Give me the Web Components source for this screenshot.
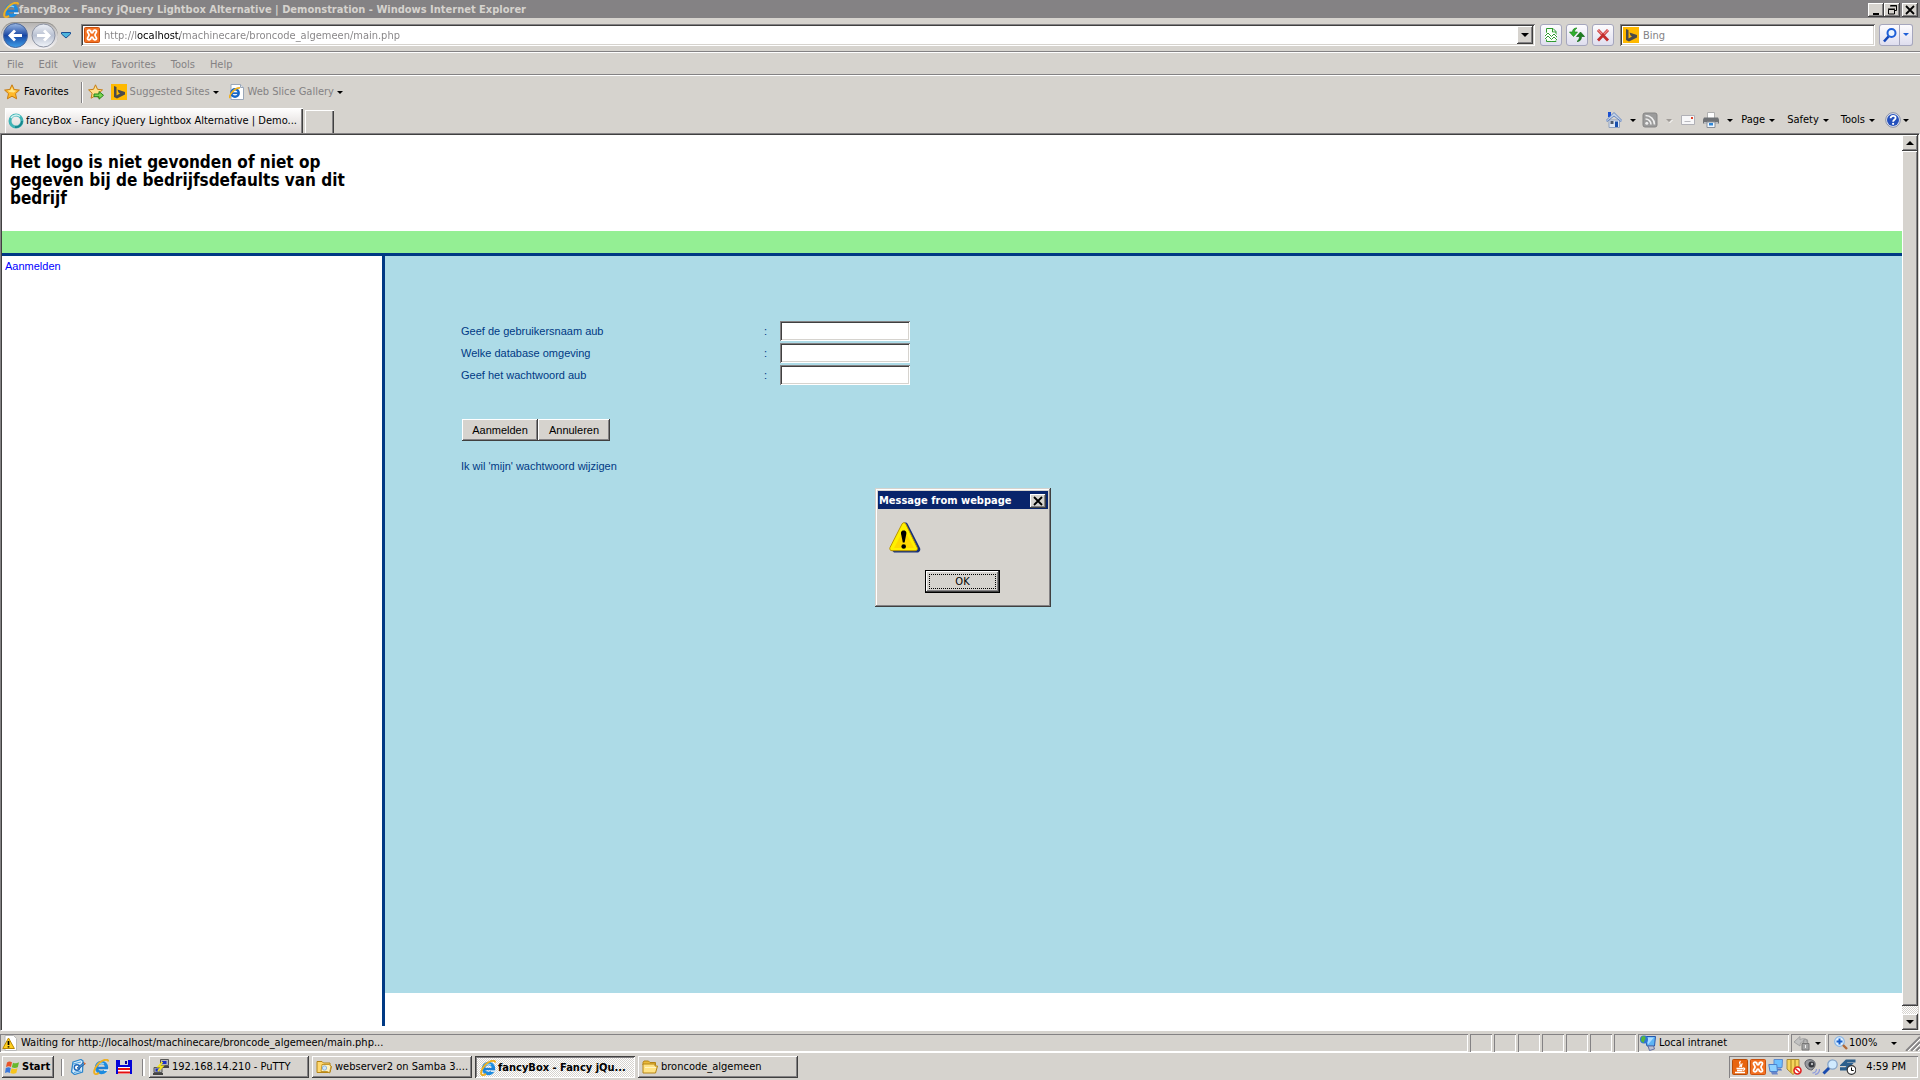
<!DOCTYPE html>
<html lang="en">
<head>
<meta charset="utf-8">
<title>fancyBox - Fancy jQuery Lightbox Alternative | Demonstration</title>
<style>
html, body { margin: 0; height: 100%; }
body { font: 11px/14px "DejaVu Sans Condensed", "DejaVu Sans", sans-serif; color: #000; background: #d6d3ce; overflow: hidden; }
</style>
</head>
<body>
<browser-desktop></browser-desktop>
<script>
const base = `
*, *::before, *::after { box-sizing: border-box; }
button, input { font: inherit; color: inherit; margin: 0; padding: 0; border: 0; background: none; border-radius: 0; outline: 0; }
button { display: flex; align-items: center; white-space: nowrap; }
.raised { background: #d6d3ce; box-shadow: inset -1px -1px #404040, inset 1px 1px #fff, inset -2px -2px #848284, inset 2px 2px #d6d3ce; }
.sunken { background: #fff; box-shadow: inset 1px 1px #848284, inset -1px -1px #fff, inset 2px 2px #404040, inset -2px -2px #d6d3ce; }
.grow { flex: 1; min-width: 0; }
`;
function define(name, css, html) {
  customElements.define(name, class extends HTMLElement {
    constructor() {
      super();
      this.attachShadow({ mode: 'open' }).innerHTML = `<style>${base}${css}</style>${html}`;
    }
  });
}

const icons = {
  ie: '<ellipse cx="8.500" cy="8.500" rx="5" ry="5" fill="none" stroke="#1b8be0" stroke-width="3.400"/><path d="M4 9h11" stroke="#1b7fd6" stroke-width="2.400"/><path d="M11 10.300h5v1.700h-5z" fill="#d6e8f5"/><path d="M5 5.500a5 5 0 0 1 6-.5" stroke="#8fd4fb" fill="none" stroke-width="1.400"/><path d="M2 15C-.5 13 3 5 9 2c3-1.600 6-2 6.500.500M2 15c1.500.5 3-.4 4-1.300" stroke="#eeb022" stroke-width="1.900" fill="none"/>',
  iepage: '<path d="M2 .5h9.500l3 3v12H2z" fill="#fff" stroke="#9aa7b8"/><path d="M11.500.5v3h3" fill="#dfe6ee" stroke="#9aa7b8"/><circle cx="6" cy="9" r="3.700" fill="none" stroke="#1466c8" stroke-width="2.400"/><path d="M3 9.200h7" stroke="#1466c8" stroke-width="1.800"/><path d="M1 14C-.5 11 6 3.500 11 4" stroke="#eeb022" stroke-width="1.700" fill="none"/>',
  xampp: '<rect x=".5" y=".5" width="15" height="15" rx="1" fill="#f37021" stroke="#c9500c"/><path d="M3.500 4.500c0-2 3.500-1.500 3.500.5 0 1 2 1 2 0 0-2 3.500-2.500 3.500-.5 0 1.500-1.500 2-1.500 3.500s1.500 2 1.500 3.500c0 2-3.500 1.500-3.500-.5 0-1-2-1-2 0 0 2-3.500 2.500-3.500.5C3.500 10 5 9.500 5 8S3.500 6 3.500 4.500z" fill="none" stroke="#fff" stroke-width="1.800"/>',
  bing: '<path d="M0 0h16v16H0z" fill="#ffb900"/><path d="M3 2l2.500 1v8.500l3.500-2-1.500-1L6.500 5.500 14 8v2.500L6 14.500 3 13z" fill="#4b4b4b"/>',
  star: '<path d="M8 .8l2.200 4.700 5.200.6-3.900 3.500 1.100 5.200L8 12.200l-4.600 2.600 1.100-5.200L.6 6.100l5.200-.6z" fill="#ffb92a" stroke="#c77c12"/><path d="M8 3l1.300 3.300 3 .5-2.500 1.700-4.300-.4-2-1.500 3-.4z" fill="#ffe68a"/>',
  addstar: '<path d="M7.500.8l2 4.500 5 .6-3.700 3.300 1 5-4.300-2.500-4.400 2.500 1-5L.6 5.900l4.900-.6z" fill="#ffe08a" stroke="#c77c12"/><path d="M6 10h5V7.500l4.500 3.800-4.500 3.900v-2.500H6z" fill="#7ad650" stroke="#24831a"/>',
  ring: '<circle cx="8" cy="8" r="6" fill="none" stroke="#3fb4b6" stroke-width="3"/><path d="M3 5a6 6 0 0 1 9-1.500" stroke="#d4f3f1" stroke-width="1.500" fill="none"/><path d="M14 8A6 6 0 0 1 7 14" stroke="#17848b" stroke-width="1.800" fill="none"/>',
  compat: '<path d="M3.500 1.500h6.500l3 3v10H3.500z" fill="#f4fff2" stroke="#2f9a2f"/><path d="M9.500 1.500v3.500h3.500" fill="none" stroke="#2f9a2f"/><path d="M2 9l3-3 3.500 3.500L11 7l3 3M2 12l3-3 3.500 3.500L11 10l3 3" fill="none" stroke="#fff" stroke-width="2.600"/><path d="M2 9l3-3 3.500 3.500L11 7l3 3M2 12l3-3 3.500 3.500L11 10l3 3" fill="none" stroke="#2f9a2f"/>',
  refresh: '<path d="M8 1C5 1 3.500 2.500 3.500 5H.5l4 4.500L8.500 5h-3C5.500 3.500 6 2.500 8 1z" fill="#31b02f" stroke="#1f8a20" stroke-width=".7"/><path d="M8 14.500c3 0 4.500-2 4.500-5h3L11.500 5 7.500 9.500h3c0 2-.5 3.500-2.500 5z" fill="#1f7d20" stroke="#0f6a14" stroke-width=".7"/>',
  stop: '<path d="M3 3l10 10.500M13 3L3 13.500" stroke="#c32d2d" stroke-width="2.800"/><path d="M3 3l4 4M13 3L9 7" stroke="#ee8585" stroke-width="1.400"/>',
  search: '<circle cx="9.500" cy="6" r="4" fill="#eaf4ff" stroke="#1d5fd8" stroke-width="2"/><path d="M6.500 9.500L2 14.500" stroke="#1547b8" stroke-width="2.600"/>',
  home: '<path d="M3 8h10.500v7.500H3z" fill="#dfe7f2" stroke="#8ea0bf"/><path d="M2 0h3v5H2z" fill="#1a4fd0"/><path d="M0 8.500L8 .5l8 8-1 1-7-5.500-7 5.500z" fill="#c6d4e6" stroke="#4c74bc" stroke-width=".8"/><path d="M4.500 9h3v3h-3z" fill="#4d5b70"/><path d="M9 9.500h3V15H9z" fill="#174fae"/>',
  rss: '<rect x="1" y="1" width="14" height="14" rx="2" fill="#9b9b9b" stroke="#858585"/><circle cx="4.800" cy="11.200" r="1.500" fill="#eee"/><path d="M3.500 7a5.500 5.500 0 0 1 5.500 5.500M3.500 3.500a9 9 0 0 1 9 9" fill="none" stroke="#eee" stroke-width="1.600"/>',
  mail: '<path d="M1.500 3.500h13v9h-13z" fill="#f7f7f9" stroke="#b0b0b6"/><path d="M4.500 9.500h6" stroke="#b9b9bf"/><path d="M11 5h2v2h-2z" fill="#e0432b"/>',
  print: '<path d="M4.500.5h7v6h-7z" fill="#fff" stroke="#b0b0b0"/><path d="M1 5.500h14l1 2v4H0v-4z" fill="#6f7276"/><path d="M1 10h14v2H1z" fill="#b9bcc0"/><path d="M4 10h8v5.500H4z" fill="#eef6ff" stroke="#8a8f97"/><path d="M6 11h4v2.500H6z" fill="#2f86d6"/>',
  help: '<circle cx="8" cy="8" r="7.300" fill="#e4e7f2" stroke="#8890a8"/><circle cx="8" cy="8" r="6" fill="#2450bc"/><path d="M5.600 6.300C5.600 3 10.600 3 10.600 6c0 1.700-2.500 1.900-2.500 3.700" fill="none" stroke="#fff" stroke-width="1.800"/><circle cx="8.100" cy="11.800" r="1.100" fill="#fff"/>',
  warnpage: '<path d="M3 .5h8.500l3 3v12H3z" fill="#fff" stroke="#b9b9b9"/><path d="M6.500 3L.8 13.500h11.600z" fill="#ffcf1f" stroke="#b88700"/><path d="M6.500 6v4M6.500 11.200v1.300" stroke="#000" stroke-width="1.700"/>',
  warn: '<path d="M15 1c1.500-1 3-.5 4 1.500L31 26c1 2-.5 4.500-2.500 4.500H5l-2-2z" fill="#16317d"/><path d="M13 2c1-1.800 2.800-1.800 3.800 0l11.400 23.500c.9 1.700-.2 3.200-2 3.200H3c-1.800 0-2.800-1.500-2-3.200z" fill="#fff000" stroke="#b89300"/><path d="M15 7L5 26h20z" fill="#ffcf00" opacity=".7"/><path d="M14.700 8.500c3 0 3 2.500 2.300 5l-1.400 7h-1.800l-1.400-7c-.7-2.500-.7-5 2.300-5z"/><circle cx="14.700" cy="24.500" r="2.300"/>',
  flag: '<path d="M2 3.500c2-1.500 3.600-1 5-.2L6 8C4.500 7 3 7 1 8z" fill="#e8542a"/><path d="M8 3.700c2 1 3.500.6 6-.5l-1.200 5c-2 1-4 1-6 0z" fill="#67b82c"/><path d="M.8 9c2-1 3.500-1 5 0l-1 5C3 13 2 13 0 14z" fill="#3a78dc"/><path d="M6.600 9.200c2 1 3.700 1 5.900 0L11.300 14c-2 1-4 1-6 0z" fill="#f7c41c"/>',
  desk: '<path d="M3 3l8-2.500 2 1.500-.5 11-8 2.500L1.500 13z" fill="#d8ecfc" stroke="#2d86cc" stroke-width="1.300"/><path d="M3 5l8-2M4 13.500l7-1.500" stroke="#4ea3e0"/><circle cx="7" cy="8.500" r="2.700" fill="#fff" stroke="#1c66b8" stroke-width="1.400"/><path d="M7 9l6.500-5.500L15 5 9 9.500z" fill="#3d92d8" stroke="#1c4f96" stroke-width=".8"/><path d="M13.500 3l2.500 1.500L14.500 6z" fill="#e06a2a"/>',
  floppy: '<path d="M0 1h16v14H0z" fill="#0404d8"/><path d="M4 1h8v5H4z" fill="#d9d9d9"/><path d="M9 2h2v3H9z" fill="#0404a0"/><path d="M2 8h12v7H2z" fill="#fff"/><path d="M2 9h12v2H2zM2 12.500h12v2H2z" fill="#e41010"/>',
  putty: '<path d="M7.500.5h8v6h-8z" fill="#b5b5b5" stroke="#555"/><path d="M9 2h4.500v3H9z" fill="#1b2fc4"/><path d="M1 8.500h8v5H1z" fill="#b5b5b5" stroke="#555"/><path d="M2.500 9.500h4.500v3H2.500z" fill="#1b2fc4"/><path d="M0 14h10v2H0zM7 7h9v2H7z" fill="#444"/><path d="M9.500 3L5.500 7.500h4L5 12" stroke="#f2e21c" stroke-width="1.800" fill="none"/>',
  folder: '<path d="M1 3.500l1-1.500h4.500l1.500 1.500h5.500V6H1z" fill="#e9b93a" stroke="#b58414"/><path d="M1 14V5h12v2h2.500L13.500 14z" fill="#ffe384" stroke="#b58414"/><path d="M3 8.500h11" stroke="#fff4c4"/>',
  netfolder: '<path d="M1 13.500V2.500h5l1.500 1.500H14v2l1.500 1.500-1.500 6z" fill="#ffd970" stroke="#b58414"/><path d="M6 5.500h7l2 1.500-1.500 7-2-1.500H5z" fill="#fff2c0" stroke="#b58414" stroke-width=".8"/><circle cx="8.500" cy="9" r="2.200" fill="#cfe6fb" stroke="#7aa7d4" stroke-width=".8"/>',
  intranet: '<path d="M4.500 1.500h11l-1 9.500H7z" fill="#5cb3f4" stroke="#2457ae"/><path d="M6.500 2.500H14l-6 7z" fill="#a9dcff"/><circle cx="4" cy="4.500" r="4" fill="#2f74d6"/><path d="M1.500 2c2-2 4.500-.5 4 1.500L3.500 8 1 6z" fill="#54b53b"/><path d="M8 11h5.500l1 3-5 1.500z" fill="#b9bfd2" stroke="#6371a3"/>',
  lock: '<path d="M0 7l6-5.500V5c3-2.500 7-1.500 7 2H8c-1 0-2 1-2 4z" fill="#c2c2c2" stroke="#a2a2a2"/><path d="M8 8.500h7V15H8z" fill="#a3a3a3" stroke="#777"/><path d="M9.500 8V6.500a2 2 0 0 1 4 0V8" fill="none" stroke="#999" stroke-width="1.400"/><path d="M11.500 10v3" stroke="#eee"/>',
  zoom: '<circle cx="5.500" cy="5.500" r="4.800" fill="#dff0ff" stroke="#8ab6e4" stroke-width="1.200"/><path d="M5.500 2.500v6M2.500 5.500h6" stroke="#1860cc" stroke-width="2"/><path d="M9 9l4 4" stroke="#b06a38" stroke-width="2.400"/>',
  java: '<rect x=".5" y=".5" width="15" height="15" rx="1" fill="#e8650e" stroke="#b84c06"/><path d="M8.500 2c-3 3 2 3-1 6M10.500 4.500c-2 1.500 0 2-1.500 3.500M4.500 9.500h6.500M5 11.500h5M3 13.500h10M11 9c2.500 0 2 2-.5 2.500" stroke="#fff" fill="none" stroke-width="1.300"/>',
  network: '<path d="M6 .5h8.500l-.5 8H6z" fill="#6cc0ff" stroke="#5a8ad0"/><path d="M8 9.500h5l1 2H9z" fill="#5578c4"/><path d="M.8 5.500h8l.6 7H2z" fill="#8fd2ff" stroke="#4c80cc"/><path d="M3 13h6l1 2.500H4z" fill="#6a86c8"/>',
  shield: '<path d="M1 .5h12v9.500l-6 5.500-6-5.500z" fill="#f6d45c" stroke="#a88a34"/><path d="M5 1v12.500M9 1v12.500" stroke="#b8962c" stroke-width="1.300"/><circle cx="11.500" cy="11.500" r="3.500" fill="#fff" stroke="#e02020" stroke-width="1.600"/><path d="M9.300 9.500l4.400 4" stroke="#e02020" stroke-width="1.500"/>',
  speaker: '<path d="M1 4c0-3 5-4 7-3 3 1 4 4 2.500 7L8 11C4 11 1 8 1 4z" fill="#96999e" stroke="#5b5e65"/><circle cx="7.500" cy="5.500" r="3" fill="#34373d"/><circle cx="8" cy="5" r="1.200" fill="#b9bcc0"/><path d="M8.500 14c2.500 0 4-2 4-4M11 15.500c3-.5 4.500-2.500 4.500-5.500" stroke="#8f9cdc" fill="none" stroke-width="1.300"/>',
  lens: '<circle cx="10.500" cy="5.500" r="4.700" fill="#d0eaff" stroke="#86a4c8" stroke-width="1.300"/><path d="M7 9L1.500 14.500" stroke="#1a4cae" stroke-width="3"/>',
  sync: '<path d="M15.500 2H6.500L3 5.500h7L6 9.800H0" stroke="#2b5f8c" stroke-width="3.200" fill="none"/><circle cx="11.500" cy="11" r="4.300" fill="#fff" stroke="#333" stroke-width="1.200"/><path d="M11.500 8.500v3h2.200" stroke="#000" fill="none"/>',
  min: '<path d="M4 10h6v2H4z"/>',
  restore: '<path d="M5.500 2.500h6v5H10M5 3h7M3.500 6.500h6v4.500h-6zM3 6h7" fill="none" stroke="#000"/>',
  close: '<path d="M4 4l8 8M12 4L4 12" stroke="#000" stroke-width="1.800"/>',
  down: '<path d="M4 6h8l-4 4z"/>',
  up: '<path d="M4 10h8L8 6z"/>',
  small: '<path d="M5 7h6l-3 3z"/>',
  nav: '<path d="M3.500 5.500h9v1.500L8 11 3.500 7z" fill="#4cb4dc" stroke="#1b4f94"/>',
  bluedown: '<path d="M5 6h6l-3 3z" fill="#1d5fd8"/>',
  graydown: '<path d="M5 7h6l-3 3z" fill="#a09c98"/><path d="M8.500 11l3-3" stroke="#fff"/>',
  grip: '<path d="M2 16L16 2M7 16l9-9M12 16l4-4" stroke="#848284" stroke-width="1.800"/><path d="M4 16L16 4M9 16l7-7M14 16l2-2" stroke="#fff"/>'
};
customElements.define('ui-icon', class extends HTMLElement {
  connectedCallback() {
    if (this.shadowRoot) return;
    const size = this.getAttribute('size') || 16;
    this.attachShadow({ mode: 'open' }).innerHTML = `<style>:host{display:block;flex:none;width:${size}px;height:${size}px}svg{display:block}</style>
      <svg width="${size}" height="${size}" viewBox="0 0 ${size} ${size}" aria-hidden="true">${icons[this.getAttribute('name')]}</svg>`;
  }
});

define('win-button', `:host{display:block} button{width:100%;height:100%;justify-content:center;color:#000}`,
  `<button class="raised" type="button"><slot></slot></button>`);

define('title-bar', `
:host{display:flex;align-items:center;height:18px;padding:1px 2px 0 3px;background:#848284;color:#d6d3ce;font-weight:bold;box-sizing:border-box}
h1{font:inherit;margin:0;white-space:nowrap}
win-button{width:16px;height:14px} win-button:last-child{margin-left:2px}`,
`<ui-icon name="ie"></ui-icon><h1 class="grow">fancyBox - Fancy jQuery Lightbox Alternative | Demonstration - Windows Internet Explorer</h1>
<win-button aria-label="Minimize"><ui-icon name="min" size="14"></ui-icon></win-button>
<win-button aria-label="Restore"><ui-icon name="restore" size="14"></ui-icon></win-button>
<win-button aria-label="Close"><ui-icon name="close"></ui-icon></win-button>`);

define('nav-orbs', `
:host{display:flex;align-items:center;width:78px}
div{display:flex;gap:3px;padding:1px 2px;border-radius:14px;background:linear-gradient(#b5b3b1,#f4f2f4);box-shadow:inset 0 1px #96948f}
svg{display:block}`,
`<div><button aria-label="Back"><svg width="25" height="25" viewBox="0 0 25 25"><defs><linearGradient id="b" x2="0" y2="1"><stop stop-color="#9cb9e4"/><stop offset=".5" stop-color="#1746a4"/><stop offset="1" stop-color="#3fa0ea"/></linearGradient></defs><circle cx="12.500" cy="12.500" r="12" fill="url(#b)" stroke="#4a679c"/><path d="M5 12.500L11 6.500l2 2-2.500 2.500H19v3h-8.500l2.500 2.500-2 2z" fill="#fff"/></svg></button>
<button aria-label="Forward"><svg width="25" height="25" viewBox="0 0 25 25"><defs><linearGradient id="f" x2="0" y2="1"><stop stop-color="#eef1f7"/><stop offset=".5" stop-color="#b9c1d2"/><stop offset="1" stop-color="#f3f6fb"/></linearGradient></defs><circle cx="12.500" cy="12.500" r="11.500" fill="url(#f)" stroke="#8d93a3"/><path d="M20 12.500L14 6.500l-2 2 2.500 2.500H6v3h8.500L12 16.500l2 2z" fill="#fff"/></svg></button></div>
<button aria-label="Recent pages"><ui-icon name="nav"></ui-icon></button>`);

define('address-bar', `
:host{display:flex;align-items:center;box-sizing:border-box;height:35px;padding:1px 7px 1px 1px;border-bottom:1px solid #fff;box-shadow:inset 0 -1px #848284}
.field{display:flex;align-items:center;height:22px;padding:2px 2px 2px 3px;gap:4px;color:#848284}
.url{margin:0 5px 0 2px}
input{height:18px;width:100%}
#url{-webkit-text-fill-color:transparent;background:linear-gradient(90deg,#848284 32px,#000 32px,#000 76px,#848284 76px);-webkit-background-clip:text;background-clip:text}
win-button{width:16px;height:18px}
.tool{height:22px;width:22px;justify-content:center;border:1px solid #a5a6bd;border-radius:3px;background:linear-gradient(#fdfcfe,#dfdeee);margin-right:4px}
.search{width:255px;margin:0 4px 0 2px}
.go{width:21px;margin:0;border-radius:3px 0 0 3px}.more{width:13px;margin:0;border-left:0;border-radius:0 3px 3px 0}`,
`<nav-orbs></nav-orbs>
<div class="field sunken grow url"><ui-icon name="xampp"></ui-icon><input id="url" aria-label="Address" value="http://localhost/machinecare/broncode_algemeen/main.php"><win-button><ui-icon name="down"></ui-icon></win-button></div>
<button class="tool" aria-label="Compatibility view"><ui-icon name="compat"></ui-icon></button>
<button class="tool" aria-label="Refresh"><ui-icon name="refresh"></ui-icon></button>
<button class="tool" aria-label="Stop"><ui-icon name="stop"></ui-icon></button>
<div class="field sunken search"><ui-icon name="bing"></ui-icon><input aria-label="Search" value="Bing"></div>
<button class="tool go" aria-label="Search"><ui-icon name="search"></ui-icon></button><button class="tool more" aria-label="Search options"><ui-icon name="bluedown"></ui-icon></button>`);

define('menu-bar', `
:host{display:flex;align-items:center;box-sizing:border-box;height:23px;padding:1px 7px 0;gap:15px;color:#848284;border-bottom:1px solid #fff;box-shadow:inset 0 -1px #848284}`,
['File','Edit','View','Favorites','Tools','Help'].map(t => `<button>${t}</button>`).join(''));

define('favorites-bar', `
:host{display:flex;align-items:center;box-sizing:border-box;height:32px;padding:0 4px}
button{gap:4px}.sep{width:2px;height:21px;margin:0 5px 0 12px;border-left:1px solid #848284;border-right:1px solid #fff}
.link{color:#848284;gap:3px;margin-left:7px}.link + .link{margin-left:5px}.link ui-icon:last-child{color:#000;margin-left:-5px}`,
`<button><ui-icon name="star"></ui-icon>Favorites</button><span class="sep"></span><button aria-label="Add to Favorites Bar"><ui-icon name="addstar"></ui-icon></button>
<button class="link"><ui-icon name="bing"></ui-icon>Suggested Sites<ui-icon name="small"></ui-icon></button>
<button class="link"><ui-icon name="iepage"></ui-icon>Web Slice Gallery<ui-icon name="small"></ui-icon></button>`);

define('tab-strip', `
:host{display:flex;align-items:flex-end;box-sizing:border-box;height:25px;padding:0 6px 0 5px}
.tab{height:25px;width:298px;padding:0 6px 0 3px;gap:2px;background:linear-gradient(#fff,#d9d3d1);box-shadow:inset 1px 1px #fff,inset -1px 0 #404040,inset -2px 0 #848284}
.new{height:23px;width:29px;margin-left:2px;background:#d6d3ce;box-shadow:inset 1px 1px #fff,inset -1px 0 #404040,inset -2px 0 #848284}
.tab span{overflow:hidden;text-overflow:ellipsis}
nav{display:flex;align-items:center;height:27px}
nav button{margin-right:7px}.w{gap:0}.w ui-icon{margin-left:-1px}.i{gap:3px}nav .i{margin-right:3px}nav .home{margin-right:1px}nav .h{margin:0 0 0 -2px;gap:0}.h ui-icon:last-child{margin-left:-3px}`,
`<button class="tab"><ui-icon name="ring"></ui-icon><span>fancyBox - Fancy jQuery Lightbox Alternative | Demo...</span></button><button class="new" aria-label="New tab"></button><span class="grow"></span>
<nav><button class="i home" aria-label="Home"><ui-icon name="home"></ui-icon><ui-icon name="small"></ui-icon></button>
<button class="i" aria-label="Feeds"><ui-icon name="rss"></ui-icon><ui-icon name="graydown"></ui-icon></button>
<button aria-label="Read mail"><ui-icon name="mail"></ui-icon></button>
<button class="i" aria-label="Print"><ui-icon name="print"></ui-icon><ui-icon name="small"></ui-icon></button>
<button class="w">Page<ui-icon name="small"></ui-icon></button><button class="w">Safety<ui-icon name="small"></ui-icon></button><button class="w">Tools<ui-icon name="small"></ui-icon></button>
<button class="h" aria-label="Help"><ui-icon name="help"></ui-icon><ui-icon name="small"></ui-icon></button></nav>`);

define('scroll-bar', `
:host{display:flex;flex-direction:column;width:16px;flex:none;background:repeating-conic-gradient(#d6d3ce 0 25%,#fff 0 50%) 0 0/2px 2px}
win-button{height:16px}.thumb{flex:1;margin-bottom:8px}`,
`<win-button><ui-icon name="up"></ui-icon></win-button><div class="thumb raised"></div><win-button><ui-icon name="down"></ui-icon></win-button>`);

define('login-form', `
:host{display:block;font-family:"Liberation Sans",Arial,sans-serif;color:#003984;padding:64px 0 0 76px}
form{display:flex;flex-direction:column}
.row{display:grid;grid-template-columns:303px 16px 130px;align-items:center;height:22px}
.row input{height:20px;width:130px;padding:0 4px;color:#000}
.buttons{display:flex;margin:33px 0 18px 1px}
win-button{height:22px}win-button:first-child{width:76px}win-button:last-child{width:72px}
a{color:inherit;text-decoration:none;align-self:flex-start}`,
`<form>
<div class="row"><label for="user">Geef de gebruikersnaam aub</label><span>:</span><input class="sunken" id="user"></div>
<div class="row"><label for="db">Welke database omgeving</label><span>:</span><input class="sunken" id="db"></div>
<div class="row"><label for="pass">Geef het wachtwoord aub</label><span>:</span><input class="sunken" id="pass" type="password"></div>
<div class="buttons"><win-button>Aanmelden</win-button><win-button>Annuleren</win-button></div>
<a href="#wijzigen">Ik wil 'mijn' wachtwoord wijzigen</a></form>`);

define('page-view', `
:host{display:flex;box-sizing:border-box;flex:1;min-height:0;border:1px solid;border-color:#848284 #fff #fff #848284;box-shadow:inset 1px 1px #404040,inset -1px 0 #d6d3ce;padding:1px 1px 0 1px;background:#fff}
main{flex:1;display:flex;flex-direction:column;min-width:0}
h2{font-size:17px;line-height:18px;margin:0;height:96px;padding:18px 8px 0;width:370px}
.green{height:22px;background:#94ef94}
.cols{flex:1;display:flex;border-top:3px solid #003984;padding-bottom:4px}
aside{width:383px;border-right:3px solid #003984;padding:3px;font-family:"Liberation Sans",Arial,sans-serif}
a{color:#00f;text-decoration:none}
section{flex:1;background:#addbe7;margin-bottom:33px}`,
`<main><h2>Het logo is niet gevonden of niet op gegeven bij de bedrijfsdefaults van dit bedrijf</h2><div class="green"></div>
<div class="cols"><aside><a href="#aanmelden">Aanmelden</a></aside><section><login-form></login-form></section></div></main><scroll-bar></scroll-bar>`);

define('status-bar', `
:host{display:flex;box-sizing:border-box;height:21px;padding:3px 0 0;gap:2px;background:#d6d3ce}
div{display:flex;align-items:center;height:18px;box-shadow:inset 1px 1px #848284,inset -1px -1px #fff}
.msg{padding-left:2px;gap:3px}.p{width:22px}.zone{width:151px;padding-left:2px;gap:3px}.lock{width:35px;padding-left:3px;gap:0}.zoom{width:92px;padding-left:6px;box-shadow:inset 1px 1px #848284}
.zoom button{gap:1px}.zoom button ui-icon:last-child{margin-left:8px}`,
`<div class="msg grow"><ui-icon name="warnpage"></ui-icon>Waiting for http://localhost/machinecare/broncode_algemeen/main.php...</div>
${'<div class="p"></div>'.repeat(7)}
<div class="zone"><ui-icon name="intranet"></ui-icon>Local intranet</div>
<div class="lock"><ui-icon name="lock"></ui-icon><ui-icon name="small"></ui-icon></div>
<div class="zoom"><button><ui-icon name="zoom" size="14"></ui-icon>100%<ui-icon name="small"></ui-icon></button><span class="grow"></span><ui-icon name="grip"></ui-icon></div>`);

define('task-button', `
:host{display:block;width:160px;height:22px}
button{width:100%;height:100%;padding:0 4px;gap:3px}
:host([active]) button{font-weight:bold;background:repeating-conic-gradient(#d6d3ce 0 25%,#fff 0 50%) 0 0/2px 2px;box-shadow:inset 1px 1px #404040,inset -1px -1px #fff,inset 2px 2px #848284;padding:2px 4px 0 5px;gap:2px}`,
`<button class="raised"><slot name="icon"></slot><slot></slot></button>`);

define('task-bar', `
:host{display:flex;box-sizing:border-box;align-items:center;height:28px;padding:3px 2px 1px;background:#d6d3ce;box-shadow:inset 0 1px #fff}
.start{width:52px;height:22px;font-weight:bold;padding-left:3px;gap:1px}
.sep{width:3px;height:17px;border-left:1px solid #848284;border-right:2px solid #fff}
.start + .sep{margin-left:7px}
.quick{display:flex;gap:7px;padding:0 10px 0 6px}.tasks{display:flex;gap:3px;margin-left:4px}
.tray{display:flex;align-items:center;height:22px;padding:0 12px 0 3px;gap:2px;box-shadow:inset 1px 1px #848284,inset -1px -1px #fff}
time{margin-left:8px;white-space:nowrap}`,
`<button class="start raised"><ui-icon name="flag"></ui-icon>Start</button>
<span class="sep"></span>
<div class="quick"><button aria-label="Show desktop"><ui-icon name="desk"></ui-icon></button><button aria-label="Internet Explorer"><ui-icon name="ie"></ui-icon></button><button aria-label="Save"><ui-icon name="floppy"></ui-icon></button></div>
<span class="sep"></span>
<div class="tasks grow">
<task-button><ui-icon slot="icon" name="putty"></ui-icon>192.168.14.210 - PuTTY</task-button>
<task-button><ui-icon slot="icon" name="netfolder"></ui-icon>webserver2 on Samba 3....</task-button>
<task-button active><ui-icon slot="icon" name="ie"></ui-icon>fancyBox - Fancy jQu...</task-button>
<task-button><ui-icon slot="icon" name="folder"></ui-icon>broncode_algemeen</task-button></div>
<div class="tray">${['java','xampp','network','shield','speaker','lens','sync'].map(n => `<ui-icon name="${n}"></ui-icon>`).join('')}<time>4:59 PM</time></div>`);

define('message-dialog', `
:host{position:absolute;left:875px;top:488px;width:176px;display:block;box-sizing:border-box;padding:3px;background:#d6d3ce;box-shadow:inset -1px -1px #404040,inset 1px 1px #d6d3ce,inset -2px -2px #848284,inset 2px 2px #fff}
header{display:flex;align-items:center;height:18px;background:#08246b;color:#fff;font-weight:bold;padding:1px 2px 0 1px}
header span{white-space:nowrap}
header win-button{width:16px;height:14px}
.body{padding:13px 11px 11px}
.ok{display:flex;justify-content:center;width:75px;height:23px;margin:16px 0 0 36px;border:1px solid #000;padding:3px}
.ok span{flex:1;height:15px;line-height:13px;border:1px dotted #000}`,
`<header><span class="grow">Message from webpage</span><win-button aria-label="Close"><ui-icon name="close"></ui-icon></win-button></header>
<div class="body"><ui-icon name="warn" size="32"></ui-icon><button class="ok raised"><span>OK</span></button></div>`);

define('browser-desktop', `:host{display:flex;flex-direction:column;height:100vh;background:#d6d3ce}`,
`<title-bar></title-bar><address-bar></address-bar><menu-bar></menu-bar><favorites-bar></favorites-bar><tab-strip></tab-strip><page-view></page-view><status-bar></status-bar><task-bar></task-bar><message-dialog role="dialog" aria-label="Message from webpage"></message-dialog>`);
</script>
</body>
</html>
